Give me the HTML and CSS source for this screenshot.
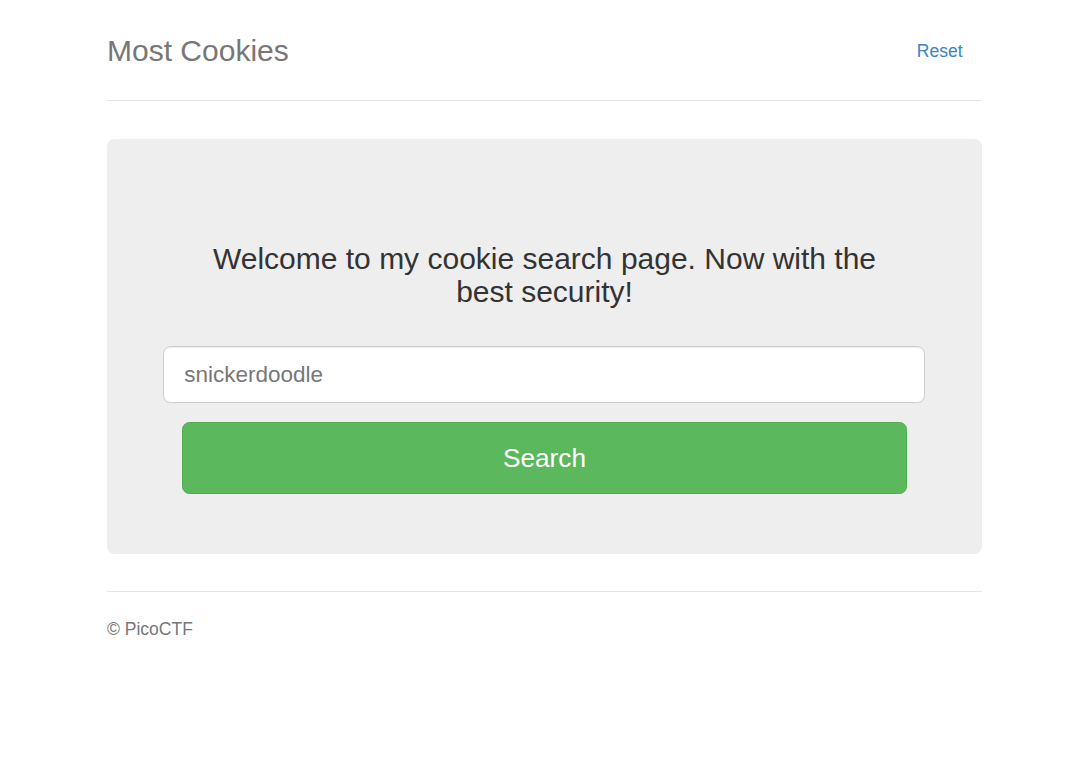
FILE: index.html
```
<!DOCTYPE html>
<html lang="en">
<head>
<meta charset="utf-8">
<title>Most Cookies</title>
<link rel="stylesheet" href="styles.css">
</head>
<body>
<div class="container">
  <div class="header">
    <h3 class="brand">Most Cookies</h3>
    <nav class="nav"><a class="nav-link" href="#">Reset</a></nav>
  </div>
  <div class="jumbotron">
    <h3 class="lead-title">Welcome to my cookie search page. Now with the best security!</h3>
    <form class="search-form">
      <input class="search-input" type="text" placeholder="snickerdoodle">
      <button class="search-btn" type="button">Search</button>
    </form>
  </div>
  <footer class="footer">
    <p>© PicoCTF</p>
  </footer>
</div>
</body>
</html>
```
FILE: styles.css
```
* { box-sizing: border-box; }
html, body { margin: 0; padding: 0; }
body {
  font-family: "Liberation Sans", Arial, Helvetica, sans-serif;
  font-size: 17.5px;
  line-height: 25px;
  color: #333;
  background: #fff;
  padding-top: 26px;
}
.container {
  width: 875px;
  margin-left: 107px;
}
.header {
  display: flex;
  justify-content: space-between;
  align-items: center;
  padding-bottom: 24px;
  border-bottom: 1px solid #e5e5e5;
  margin-bottom: 38px;
}
.brand {
  margin: 0;
  font-size: 30px;
  line-height: 50px;
  font-weight: 500;
  color: #777;
}
.nav-link {
  display: block;
  padding: 12.5px 19.5px 12.5px 18.75px;
  color: #3a84c4;
  text-decoration: none;
  font-size: 17.5px;
  line-height: 25px;
}
.jumbotron {
  background: #eee;
  border-radius: 7.5px;
  padding: 60px 75px 60px;
  text-align: center;
  margin-bottom: 37px;
}
.lead-title {
  margin: 43px 0 38px;
  font-size: 30px;
  line-height: 33px;
  font-weight: 500;
  color: #333;
}
.search-form {
  display: flex;
  flex-direction: column;
  align-items: stretch;
  margin: 0;
}
.search-input {
  margin: 0 -18px 0 -18.75px;
  height: 57px;
  padding: 12.5px 20px;
  font-family: "Liberation Sans", Arial, Helvetica, sans-serif;
  font-size: 22.5px;
  line-height: 1.3333;
  color: #555;
  background: #fff;
  border: 1px solid #ccc;
  border-radius: 7.5px;
  box-shadow: inset 0 1px 1px rgba(0,0,0,.075);
  outline: none;
}
.search-input::placeholder { color: #777; opacity: 1; }
.search-btn {
  margin-top: 19px;
  height: 72px;
  padding: 17.5px 30px;
  font-family: "Liberation Sans", Arial, Helvetica, sans-serif;
  font-size: 26.25px;
  line-height: 35px;
  color: #fff;
  background: #5cb85c;
  border: 1px solid #4cae4c;
  border-radius: 7.5px;
  cursor: pointer;
}
.footer {
  border-top: 1px solid #e5e5e5;
  padding-top: 25px;
  color: #777;
}
.footer p {
  margin: 0 0 12.5px;
}
```
